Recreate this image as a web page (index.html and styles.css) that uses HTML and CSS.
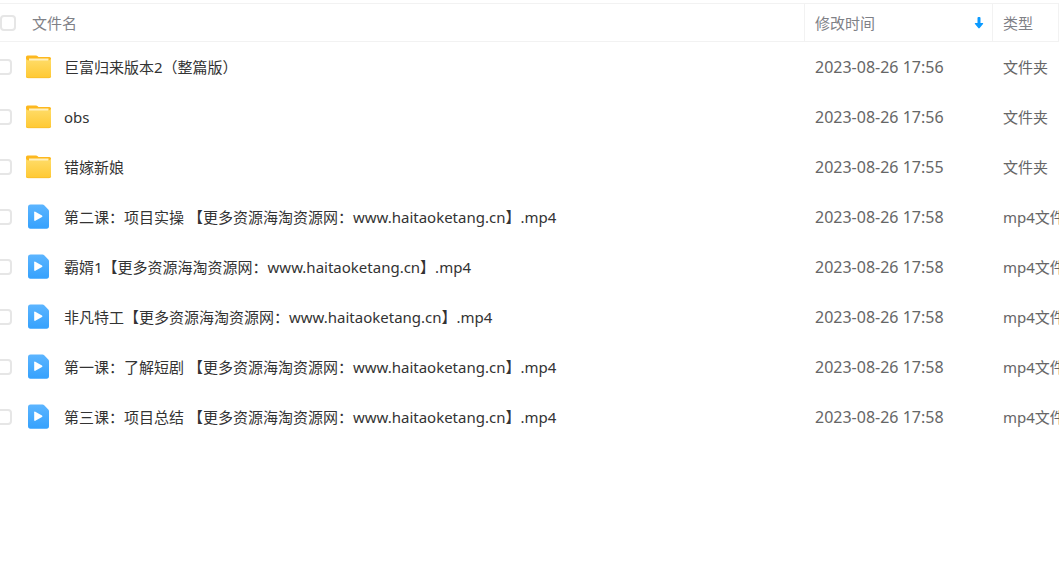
FILE: index.html
```
<!DOCTYPE html>
<html lang="zh-CN">
<head>
    <meta charset="UTF-8">
    <meta name="viewport" content="width=device-width, initial-scale=1.0">
    <title>文件列表</title>
    <link rel="stylesheet" href="styles.css">
</head>
<body>
    <!-- shared icons -->
    <svg class="icon-defs" aria-hidden="true">
        <defs>
            <linearGradient id="folder-fill" x1="0" y1="0" x2="0" y2="1">
                <stop offset="0" stop-color="#ffdc68"/>
                <stop offset="1" stop-color="#ffc933"/>
            </linearGradient>
            <linearGradient id="video-fill" x1="0" y1="0" x2="0" y2="1">
                <stop offset="0" stop-color="#5cb5ff"/>
                <stop offset="1" stop-color="#35a1fd"/>
            </linearGradient>
        </defs>
        <symbol id="icon-folder" viewBox="0 0 26 26">
            <path d="M1.500 1.500H10Q11 1.500 11.700 2.300L12.500 3H23.500Q25 3 25 4.500V12H0V3Q0 1.500 1.500 1.500Z" fill="#fdb81e"/>
            <path d="M3 4.500H22.500V8H3Z" fill="#fff0bd"/>
            <path d="M0 5Q1.500 6.500 3.500 6.500H21.500Q23.500 6.500 25 5V22.500Q25 24 23.500 24H1.500Q0 24 0 22.500Z" fill="url(#folder-fill)"/>
            <path d="M.4 22.500Q.8 23.700 2 23.700H23Q24.200 23.700 24.600 22.500" fill="none" stroke="#f8bd2b" stroke-width=".8"/>
        </symbol>
        <symbol id="icon-video" viewBox="0 0 26 26">
            <path d="M4.500 .5H16.500Q17.500 .5 18.200 1.200L22.300 5.500Q23 6.200 23 7.200V22Q23 24.700 20.500 24.700H4.500Q2 24.700 2 22V3.200Q2 .5 4.500 .5Z" fill="url(#video-fill)"/>
            <path d="M8.200 8.300Q8.200 7.100 9.300 7.700L16 11.500Q17 12.200 16 12.900L9.300 16.700Q8.200 17.300 8.200 16.100Z" fill="#fff"/>
        </symbol>
    </svg>

    <table class="file-table">
        <thead>
            <tr>
                <th class="col-name">
                    <div class="cell">
                        <input type="checkbox" class="check" aria-label="全选">
                        <span>文件名</span>
                    </div>
                </th>
                <th class="col-time">
                    <div class="cell sort">
                        <span>修改时间</span>
                        <svg class="sort-icon" viewBox="0 0 10 12" aria-hidden="true">
                            <path d="M3.500 1Q3.500 0 4.500 0H5.500Q6.500 0 6.500 1V6H8.500Q9.800 6 9 7L5.700 11Q5 11.800 4.300 11L1 7Q.2 6 1.500 6H3.500Z" fill="#0a9aff"/>
                        </svg>
                    </div>
                </th>
                <th class="col-type">类型</th>
            </tr>
        </thead>
        <tbody>
            <tr>
                <td><div class="cell"><input type="checkbox" class="check" id="file1"><svg class="icon"><use href="#icon-folder"/></svg><label for="file1">巨富归来版本2（整篇版）</label></div></td>
                <td class="time">2023-08-26 17:56</td>
                <td>文件夹</td>
            </tr>
            <tr>
                <td><div class="cell"><input type="checkbox" class="check" id="file2"><svg class="icon"><use href="#icon-folder"/></svg><label for="file2">obs</label></div></td>
                <td class="time">2023-08-26 17:56</td>
                <td>文件夹</td>
            </tr>
            <tr>
                <td><div class="cell"><input type="checkbox" class="check" id="file3"><svg class="icon"><use href="#icon-folder"/></svg><label for="file3">错嫁新娘</label></div></td>
                <td class="time">2023-08-26 17:55</td>
                <td>文件夹</td>
            </tr>
            <tr>
                <td><div class="cell"><input type="checkbox" class="check" id="file4"><svg class="icon"><use href="#icon-video"/></svg><label for="file4">第二课：项目实操 【更多资源海淘资源网：www.haitaoketang.cn】.mp4</label></div></td>
                <td class="time">2023-08-26 17:58</td>
                <td>mp4文件</td>
            </tr>
            <tr>
                <td><div class="cell"><input type="checkbox" class="check" id="file5"><svg class="icon"><use href="#icon-video"/></svg><label for="file5">霸婿1【更多资源海淘资源网：www.haitaoketang.cn】.mp4</label></div></td>
                <td class="time">2023-08-26 17:58</td>
                <td>mp4文件</td>
            </tr>
            <tr>
                <td><div class="cell"><input type="checkbox" class="check" id="file6"><svg class="icon"><use href="#icon-video"/></svg><label for="file6">非凡特工【更多资源海淘资源网：www.haitaoketang.cn】.mp4</label></div></td>
                <td class="time">2023-08-26 17:58</td>
                <td>mp4文件</td>
            </tr>
            <tr>
                <td><div class="cell"><input type="checkbox" class="check" id="file7"><svg class="icon"><use href="#icon-video"/></svg><label for="file7">第一课：了解短剧 【更多资源海淘资源网：www.haitaoketang.cn】.mp4</label></div></td>
                <td class="time">2023-08-26 17:58</td>
                <td>mp4文件</td>
            </tr>
            <tr>
                <td><div class="cell"><input type="checkbox" class="check" id="file8"><svg class="icon"><use href="#icon-video"/></svg><label for="file8">第三课：项目总结 【更多资源海淘资源网：www.haitaoketang.cn】.mp4</label></div></td>
                <td class="time">2023-08-26 17:58</td>
                <td>mp4文件</td>
            </tr>
        </tbody>
    </table>
</body>
</html>
```
FILE: styles.css
```
* {
    box-sizing: border-box;
}
body {
    margin: 0;
    padding: 3px 2px 0 0;
    background: #fff;
    color: #666;
    font-family: "Noto Sans", "Noto Sans CJK SC", sans-serif;
    font-size: 15px;
    line-height: 20px;
}
.icon-defs {
    position: absolute;
    width: 0;
    height: 0;
}
.file-table {
    width: 100%;
    table-layout: fixed;
    border-collapse: separate;
    border-spacing: 0;
}
.file-table th,
.file-table td {
    padding: 0 0 0 10px;
    text-align: left;
    white-space: nowrap;
    overflow: hidden;
}
.file-table th {
    height: 39px;
    border-top: 1px solid #f2f2f2;
    border-bottom: 1px solid #f2f2f2;
    border-right: 1px solid #f2f2f2;
    font-weight: normal;
    color: #7f8187;
}
.file-table td {
    height: 50px;
}
.file-table th:first-child,
.file-table td:first-child {
    padding-left: 0;
}
.col-time {
    width: 188px;
}
.col-type {
    width: 66px;
}
.cell {
    display: flex;
    align-items: center;
}
.check {
    appearance: none;
    flex: none;
    width: 16px;
    height: 16px;
    margin: 0 16px 0 0;
    border: 2px solid #e6e6e6;
    border-radius: 4px;
    background: #fff;
}
.check:checked {
    background: #0a9aff;
    border-color: #0a9aff;
}
td .check {
    margin: 0 14px 0 -4px;
}
.icon {
    flex: none;
    width: 26px;
    height: 26px;
    margin-right: 12px;
}
label {
    color: #333;
}
.sort {
    justify-content: space-between;
    padding-right: 8px;
}
.sort-icon {
    width: 10px;
    height: 12px;
}
.time {
    font-size: 16px;
}
```
